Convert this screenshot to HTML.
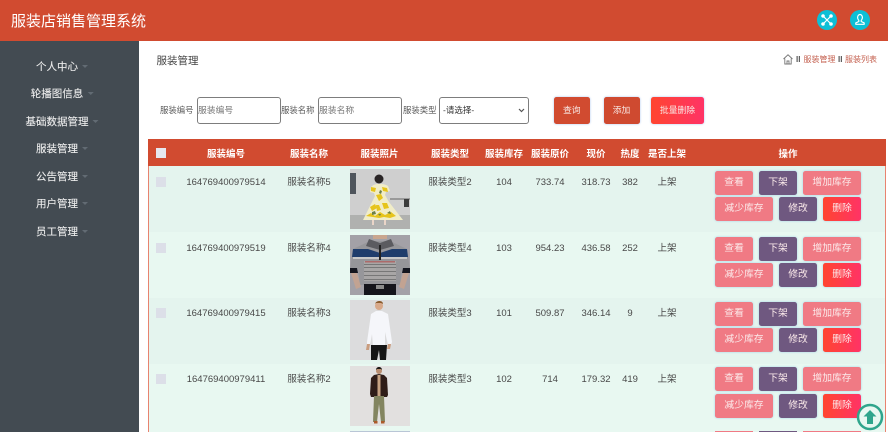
<!DOCTYPE html>
<html lang="zh">
<head>
<meta charset="utf-8">
<style>
html,body{margin:0;padding:0;width:888px;height:432px;overflow:hidden;background:#fff}
body{position:relative;font-family:"Liberation Sans","Noto Sans CJK SC",sans-serif;color:#444}
div,span,b{position:absolute;white-space:nowrap;box-sizing:border-box}
#w{left:0;top:0;width:888px;height:432px;filter:blur(.3px)}
#hd{left:-4px;top:-4px;width:900px;height:44.500px;background:#d14b30}
#hd .t{left:15px;top:15px;font-size:15px;line-height:21px;color:#fff}
.ci{width:20px;height:20px;border-radius:50%;background:#0dbfd6;top:13.500px}
.ci svg{position:absolute;left:0;top:0}
#sb{left:-4px;top:41px;width:143px;height:400px;background:#434b52}
.m{font-size:10.500px;line-height:14px;color:#eee;transform:translateX(-50%);-webkit-text-stroke:.1px #eee}
.m i{position:absolute;right:-10px;top:5px;width:0;height:0;border-left:3px solid transparent;border-right:3px solid transparent;border-top:3px solid #626b73}
.h{left:156.500px;top:54px;font-size:10.500px;line-height:14px;color:#444}
.bc{top:54px;font-size:8px;line-height:12px;color:#c4604f}
.sep{top:54px;font-size:8px;line-height:12px;color:#555;font-weight:bold}
.l{top:104px;font-size:8.400px;line-height:12px;color:#5a5a5a}
.in{top:97px;height:27px;border:1px solid #7d7d7d;border-radius:3px;background:#fff;font-size:8.800px;line-height:25px;color:#777;padding-left:0}
.b{top:97px;height:26.500px;border-radius:2.500px;color:#f8e8e4;font-size:8.800px;line-height:26px;text-align:center;box-shadow:0 0 2px #a9c6f0}
#tb{left:148px;top:139px;width:737.500px;height:300px;border-left:1px solid #e8836f;border-right:1px solid #e8836f;background:#e8f8f1}
#th{left:148px;top:139px;width:737.500px;height:27px;background:#d14b30}
.r{left:149px;width:735.500px;height:66px}
.c{transform:translateX(-50%);font-size:9.500px;line-height:13px;color:#484848;margin-top:.5px}
.th{top:147.500px;color:#fff;font-weight:bold}
.ck{left:156px;width:10px;height:10px;background:#dcdfe8}
.img{left:350px;width:60px;height:60px;overflow:hidden}
.img svg{display:block;position:absolute;left:0;top:0}
.a{height:24px;border-radius:2.500px;font-size:9.800px;line-height:24px;text-align:center;color:#fbeaea;box-shadow:0 0 2px #9fd4ea}
.p{background:#f07a84}.v{background:#6f5880}.g{background:linear-gradient(90deg,#ff4530,#ff3366)}
</style>
</head>
<body>
<div id="w">
<div id="hd">
<div class="t">服装店销售管理系统</div>
<div class="ci" style="left:821px"><svg width="20" height="20" viewBox="0 0 20 20" fill="none" stroke="#fff" stroke-width="1.200" stroke-linecap="round"><path d="M7 7l6 6M13 7l-6 6"/><circle cx="6" cy="6" r="1.200" fill="#fff"/><circle cx="14" cy="6" r="1.200" fill="#fff"/><circle cx="6" cy="14" r="1.200" fill="#fff"/><circle cx="14" cy="14" r="1.200" fill="#fff"/></svg></div>
<div class="ci" style="left:854px"><svg width="20" height="20" viewBox="0 0 20 20" fill="none" stroke="#fff" stroke-width="1.200" stroke-linejoin="round"><path d="M7.600 7.500a2.400 3 0 1 1 4.800 0c0 1.500-.7 2.400-1.200 3v1l3 1.400v1.400H5.800v-1.400l3-1.400v-1c-.5-.6-1.200-1.500-1.200-3z"/></svg></div>
</div>
<div id="sb"></div>
<div class="m" style="left:57px;top:60px">个人中心<i></i></div>
<div class="m" style="left:57px;top:87px">轮播图信息<i></i></div>
<div class="m" style="left:57px;top:115px">基础数据管理<i></i></div>
<div class="m" style="left:57px;top:142px">服装管理<i></i></div>
<div class="m" style="left:57px;top:170px">公告管理<i></i></div>
<div class="m" style="left:57px;top:197px">用户管理<i></i></div>
<div class="m" style="left:57px;top:225px">员工管理<i></i></div>

<div class="h">服装管理</div>
<svg style="position:absolute;left:783px;top:54px" width="10" height="11" viewBox="0 0 10 11" fill="none" stroke="#777" stroke-width="0.900"><path d="M.5 5L5 .8 9.500 5M1.800 4.500v5.500h6.400V4.500M4 10V7h2v3"/></svg>
<div class="sep" style="left:796px">II</div>
<div class="bc" style="left:803.500px">服装管理</div>
<div class="sep" style="left:838px">II</div>
<div class="bc" style="left:845px">服装列表</div>

<div class="l" style="left:160px">服装编号</div>
<div class="in" style="left:197px;width:83.500px">服装编号</div>
<div class="l" style="left:281px">服装名称</div>
<div class="in" style="left:318px;width:83.500px">服装名称</div>
<div class="l" style="left:403px">服装类型</div>
<div class="in" style="left:439px;width:90px;padding-left:3px;color:#333;font-size:8.500px">-请选择-<svg style="position:absolute;right:3px;top:10px" width="7" height="5" viewBox="0 0 7 5" fill="none" stroke="#555" stroke-width="1.200"><path d="M1 1l2.500 2.500L6 1"/></svg></div>
<div class="b" style="left:554px;width:35.500px;background:#d14b30">查询</div>
<div class="b" style="left:603.500px;width:36px;background:#cf4a30">添加</div>
<div class="b" style="left:651px;width:53px;background:linear-gradient(90deg,#ff4530,#ff3366)">批量删除</div>

<div id="tb"></div>
<div id="th"></div>
<div class="r" style="top:166px;background:#e4f4ee"></div>
<div class="r" style="top:298px;background:#e4f4ee"></div>

<div class="ck" style="top:148px;background:#e6e8ef"></div>
<div class="c th" style="left:226px">服装编号</div>
<div class="c th" style="left:309px">服装名称</div>
<div class="c th" style="left:379.500px">服装照片</div>
<div class="c th" style="left:450px">服装类型</div>
<div class="c th" style="left:504px">服装库存</div>
<div class="c th" style="left:550px">服装原价</div>
<div class="c th" style="left:596px">现价</div>
<div class="c th" style="left:630px">热度</div>
<div class="c th" style="left:667px">是否上架</div>
<div class="c th" style="left:788px">操作</div>

<!-- row 1 -->
<div class="ck" style="top:177px"></div>
<div class="c" style="left:226px;top:175px">164769400979514</div>
<div class="c" style="left:309px;top:175px">服装名称5</div>
<div class="img" style="top:169px"><svg width="60" height="60" viewBox="0 0 60 60"><rect width="60" height="60" fill="#cfcfcf"/><rect y="46" width="60" height="14" fill="#b0b1af"/><rect x="0" y="4" width="6" height="21" fill="#4f555c"/><rect x="40" y="29" width="20" height="2" fill="#9a9a9a"/><rect x="54" y="30" width="5" height="8" fill="#3c3c3c"/><circle cx="29" cy="10" r="4.500" fill="#2a2526"/><path d="M29 15c-2 0-5 0-8 3l-1 5 4 1 1 3-12 24h40L39 33l-4-7 1-3 4-1-2-5c-3-2-6-2-9-2z" fill="#f1edc8"/><path d="M21 18l5 1-1 4-4-1zM32 18l5 1 1 4-5-1zM26 26l5-1 2 4-4 3zM20 38l5-3 2 4-5 3zM32 34l5 0 2 5-5 1zM16 47l5-3 4 3 5-4 5 3 6-3 5 4-6 2-6-1-5 1-6-1zM26 36l3 0 2 5-4 1z" fill="#e6c41c"/><path d="M22 43l3-1 1 3-4 1zM30 21l2 1-1 3-2-1zM37 44l3-2 1 3zM28 45l3 0-1 2z" fill="#6c7f48"/><rect x="22" y="51" width="2" height="5" fill="#ead5c8"/><rect x="34" y="51" width="2" height="5" fill="#ead5c8"/></svg></div>
<div class="c" style="left:450px;top:175px">服装类型2</div>
<div class="c" style="left:504px;top:175px">104</div>
<div class="c" style="left:550px;top:175px">733.74</div>
<div class="c" style="left:596px;top:175px">318.73</div>
<div class="c" style="left:630px;top:175px">382</div>
<div class="c" style="left:667px;top:175px">上架</div>
<div class="a p" style="left:715px;top:171px;width:38px">查看</div>
<div class="a v" style="left:759px;top:171px;width:38px">下架</div>
<div class="a p" style="left:803px;top:171px;width:58px">增加库存</div>
<div class="a p" style="left:715px;top:197px;width:58px">减少库存</div>
<div class="a v" style="left:779px;top:197px;width:38px">修改</div>
<div class="a g" style="left:823px;top:197px;width:38px">删除</div>

<!-- row 2 -->
<div class="ck" style="top:242.500px"></div>
<div class="c" style="left:226px;top:241px">164769400979519</div>
<div class="c" style="left:309px;top:241px">服装名称4</div>
<div class="img" style="top:234.500px"><svg width="60" height="60" viewBox="0 0 60 60"><rect width="60" height="60" fill="#a3a1a7"/><path d="M23 0h14v4H23z" fill="#c9a68f"/><path d="M3 14L20 6h20l17 8 3 20H52l-2 16H10L8 34H0z" fill="#96969a"/><path d="M19 4l11 4 11-4 3 7-14 4-14-4z" fill="#5b5b60"/><path d="M3 14h15l12 4 12-4h15l1 8H2z" fill="#1f3d6c"/><path d="M3 22h54v2H3z" fill="#c8c8c8"/><path d="M14 26h32v20H14z" fill="#a8a6a6"/><path d="M14 29h32v1H14zM14 32h32v1H14zM14 36h32v1H14zM14 40h32v1H14zM14 44h32v1H14z" fill="#777"/><rect x="15" y="26" width="30" height="1.500" fill="#ad6a6a"/><path d="M0 33h7l1 5H0zM53 33h7v5h-8z" fill="#14161f"/><path d="M1 38h6l4 14-5 2zM53 38h6l-5 16-5-2z" fill="#c2a392"/><rect x="14" y="49" width="32" height="11" fill="#15151b"/><rect x="26" y="50" width="8" height="4" fill="#8b8b8b"/><rect x="29" y="10" width="2" height="15" fill="#222"/></svg></div>
<div class="c" style="left:450px;top:241px">服装类型4</div>
<div class="c" style="left:504px;top:241px">103</div>
<div class="c" style="left:550px;top:241px">954.23</div>
<div class="c" style="left:596px;top:241px">436.58</div>
<div class="c" style="left:630px;top:241px">252</div>
<div class="c" style="left:667px;top:241px">上架</div>
<div class="a p" style="left:715px;top:236.500px;width:38px">查看</div>
<div class="a v" style="left:759px;top:236.500px;width:38px">下架</div>
<div class="a p" style="left:803px;top:236.500px;width:58px">增加库存</div>
<div class="a p" style="left:715px;top:262.500px;width:58px">减少库存</div>
<div class="a v" style="left:779px;top:262.500px;width:38px">修改</div>
<div class="a g" style="left:823px;top:262.500px;width:38px">删除</div>

<!-- row 3 -->
<div class="ck" style="top:308px"></div>
<div class="c" style="left:226px;top:306px">164769400979415</div>
<div class="c" style="left:309px;top:306px">服装名称3</div>
<div class="img" style="top:300px"><svg width="60" height="60" viewBox="0 0 60 60"><rect width="60" height="60" fill="#dcdcdd"/><circle cx="29" cy="6" r="4" fill="#d8a98a"/><path d="M25 4c1-4 8-4 8 0l-2-1h-5z" fill="#8a5a2c"/><path d="M21 14l5-3h6l6 3 4 28-1 3h-3l-3-13 0 14H23l-1-12-2 11h-3v-3z" fill="#f5f6fa"/><path d="M21 45h16l-1 15h-6l-1-10-2 10h-6z" fill="#151515"/><path d="M17 44h3l-1 6h-3zM38 44h3l-1 5h-3z" fill="#c99c7e"/></svg></div>
<div class="c" style="left:450px;top:306px">服装类型3</div>
<div class="c" style="left:504px;top:306px">101</div>
<div class="c" style="left:550px;top:306px">509.87</div>
<div class="c" style="left:596px;top:306px">346.14</div>
<div class="c" style="left:630px;top:306px">9</div>
<div class="c" style="left:667px;top:306px">上架</div>
<div class="a p" style="left:715px;top:302px;width:38px">查看</div>
<div class="a v" style="left:759px;top:302px;width:38px">下架</div>
<div class="a p" style="left:803px;top:302px;width:58px">增加库存</div>
<div class="a p" style="left:715px;top:328px;width:58px">减少库存</div>
<div class="a v" style="left:779px;top:328px;width:38px">修改</div>
<div class="a g" style="left:823px;top:328px;width:38px">删除</div>

<!-- row 4 -->
<div class="ck" style="top:374px"></div>
<div class="c" style="left:226px;top:372px">164769400979411</div>
<div class="c" style="left:309px;top:372px">服装名称2</div>
<div class="img" style="top:365.500px"><svg width="60" height="60" viewBox="0 0 60 60"><rect width="60" height="60" fill="#e2e0df"/><circle cx="29" cy="5" r="3" fill="#b98d70"/><path d="M26 4c0-4 6-4 6 0l-1-1h-4z" fill="#1c1715"/><path d="M24 9l5-1 5 1 3 3 1 17-1 2H21l-1-3 1-16z" fill="#2f1d18"/><rect x="27.500" y="9" width="3" height="21" fill="#c7a383"/><path d="M24 30h10l1 26h-4l-2-18-2 18h-4z" fill="#838560"/><path d="M24 55h3.500v2.500H24zM31 55h3.500v2.500H31z" fill="#ac5a2a"/></svg></div>
<div class="c" style="left:450px;top:372px">服装类型3</div>
<div class="c" style="left:504px;top:372px">102</div>
<div class="c" style="left:550px;top:372px">714</div>
<div class="c" style="left:596px;top:372px">179.32</div>
<div class="c" style="left:630px;top:372px">419</div>
<div class="c" style="left:667px;top:372px">上架</div>
<div class="a p" style="left:715px;top:367px;width:38px">查看</div>
<div class="a v" style="left:759px;top:367px;width:38px">下架</div>
<div class="a p" style="left:803px;top:367px;width:58px">增加库存</div>
<div class="a p" style="left:715px;top:393.500px;width:58px">减少库存</div>
<div class="a v" style="left:779px;top:393.500px;width:38px">修改</div>
<div class="a g" style="left:823px;top:393.500px;width:38px">删除</div>

<!-- row 5 sliver -->
<div style="left:350px;top:431px;width:60px;height:3px;background:#b9c6d6"></div>
<div class="p" style="position:absolute;left:715px;top:431px;width:38px;height:3px"></div>
<div class="v" style="position:absolute;left:759px;top:431px;width:38px;height:3px"></div>
<div class="p" style="position:absolute;left:803px;top:431px;width:58px;height:3px"></div>

<svg style="position:absolute;left:856px;top:403px" width="28" height="28" viewBox="0 0 28 28"><circle cx="14" cy="14" r="12" fill="#e8f8f1" stroke="#2fa58c" stroke-width="2.500"/><path d="M14 7l6.500 6.500H17V21h-6v-7.500H7.500z" fill="#2fa58c"/></svg>
</div>
</body>
</html>
